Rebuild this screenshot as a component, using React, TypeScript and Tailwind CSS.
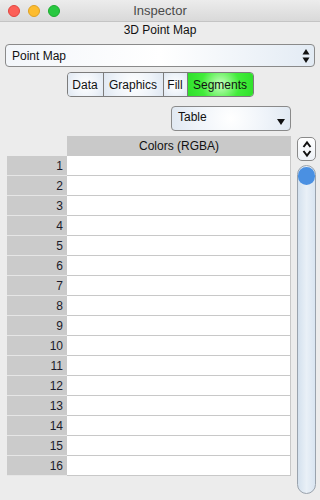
const rows = Array.from({ length: 16 }, (_, i) => i + 1);
const tabs = [
  { label: 'Data', w: 'w-[35px]' },
  { label: 'Graphics', w: 'w-[60px]' },
  { label: 'Fill', w: 'w-[24px]' },
  { label: 'Segments', w: 'w-[66px]' },
];

function UpDown() {
  return (
    <svg width="8" height="16" viewBox="0 0 8 16" className="block">
      <path d="M4 1 L7.5 6.5 L0.5 6.5 Z" fill="#111" />
      <path d="M4 15 L7.5 9.5 L0.5 9.5 Z" fill="#111" />
    </svg>
  );
}

export default function App() {
  return (
    <div
      className="w-[320px] h-[500px] bg-[#ececec] text-[12px] text-[#111] overflow-hidden"
      style={{ fontFamily: '"Liberation Sans", Arial, sans-serif' }}
    >
      {/* title bar */}
      <div className="h-[22px] grid grid-cols-[1fr_auto_1fr] items-center bg-gradient-to-b from-[#ececec] to-[#d9d9d9] border-b border-[#c4c4c4] rounded-t-[5px]">
        <div className="flex items-center gap-[8px] pl-[8px]">
          <span className="w-[12px] h-[12px] rounded-full bg-[#fc5f57] border border-[#e1453f]" />
          <span className="w-[12px] h-[12px] rounded-full bg-[#fdbc2e] border border-[#dea123]" />
          <span className="w-[12px] h-[12px] rounded-full bg-[#28c840] border border-[#1dab2f]" />
        </div>
        <div className="text-[13px] text-[#4a4a4a]">Inspector</div>
        <div />
      </div>

      <div className="text-center leading-[15px] pt-[1px] h-[20px]">3D Point Map</div>

      {/* popup */}
      <div className="px-[5px] pt-[2px]">
        <div className="h-[23px] flex items-center justify-between pl-[6px] pr-[4px] rounded-[4px] border border-[#8a8a8a] bg-gradient-to-r from-[#f3f6fa] via-[#ffffff] to-[#e3ebf4]">
          <span className="text-[12px]">Point Map</span>
          <UpDown />
        </div>
      </div>

      {/* segmented tabs */}
      <div className="flex justify-center pt-[5px]">
        <div className="flex h-[25px] rounded-[4px] border border-[#7c7c7c] overflow-hidden">
          {tabs.map((t, i) => (
            <div
              key={t.label}
              className={
                (t.label === 'Segments'
                  ? 'bg-[radial-gradient(circle,#c8ffc0_0%,#42ec3a_55%,#2ee02a_100%)] '
                  : 'bg-[radial-gradient(circle,#ffffff_0%,#eef3f9_60%,#dfe7f1_100%)] ') +
                (i > 0 ? 'border-l border-[#7c7c7c] ' : '') +
                t.w +
                ' flex items-center justify-center text-[12px]'
              }
            >
              {t.label}
            </div>
          ))}
        </div>
      </div>

      {/* Table dropdown */}
      <div className="flex justify-end pr-[29px] pt-[9px]">
        <div className="w-[120px] h-[25px] flex items-center justify-between pl-[6px] pr-[5px] rounded-[4px] border border-[#8a8a8a] bg-[radial-gradient(circle,#ffffff_0%,#eef3f9_60%,#e1e9f2_100%)]">
          <span className="-mt-[3px]">Table</span>
          <svg width="8" height="6" viewBox="0 0 8 6" className="mt-[6px]">
            <path d="M0 0 L8 0 L4 6 Z" fill="#111" />
          </svg>
        </div>
      </div>

      {/* table + scroller */}
      <div className="flex pl-[7px] pt-[5px] gap-[6px]">
        <div className="w-[284px]">
          <div className="flex h-[20px]">
            <div className="w-[60px]" />
            <div className="flex-1 bg-[#c9c9c9] flex items-center justify-center">Colors (RGBA)</div>
          </div>
          {rows.map((r) => (
            <div key={r} className="flex h-[20px]">
              <div className="w-[60px] bg-[#cbcbcb] border-b border-[#e6e6e6] flex items-center justify-end pr-[4px] text-[#1b1b2a]">
                {r}
              </div>
              <div className="flex-1 bg-white border-b border-r border-[#c8c8c8]" />
            </div>
          ))}
        </div>

        <div className="w-[19px] flex flex-col gap-[4px] pt-[1px]">
          <div className="h-[24px] rounded-[5px] border border-[#8a8a8a] bg-gradient-to-b from-white to-[#eef2f7] flex items-center justify-center">
            <svg width="10" height="18" viewBox="0 0 10 18">
              <path d="M1.5 7 L5 2.5 L8.5 7" stroke="#111" strokeWidth="2" fill="none" />
              <path d="M1.5 11 L5 15.5 L8.5 11" stroke="#111" strokeWidth="2" fill="none" />
            </svg>
          </div>
          <div className="h-[329px] rounded-full border border-[#9aa3ad] bg-gradient-to-r from-[#d4e1ee] via-[#e9f0f7] to-[#d9e5f1] flex justify-center pt-[1px]">
            <div className="w-[18px] h-[18px] rounded-full bg-[#4a90e2]" />
          </div>
        </div>
      </div>
    </div>
  );
}
